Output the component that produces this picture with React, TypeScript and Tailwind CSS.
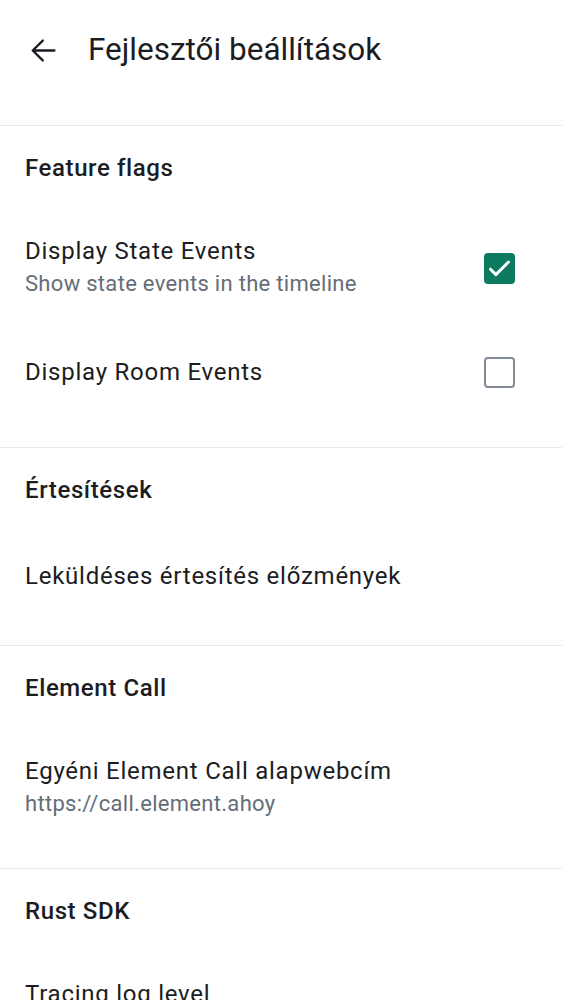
import { ReactNode } from 'react'

const FONT = { fontFamily: 'Roboto, "Noto Sans", sans-serif' }

function Checkbox({ checked }: { checked: boolean }) {
  if (checked) {
    return (
      <div className="w-[31px] h-[31px] rounded-[4px] bg-[#0b7a5f] flex items-center justify-center">
        <svg width="31" height="31" viewBox="0 0 31 31" fill="none">
          <path d="M6.5 16.2l5.4 5.4L24.5 9" stroke="white" strokeWidth="3" strokeLinecap="round" strokeLinejoin="round" />
        </svg>
      </div>
    )
  }
  return <div className="w-[31px] h-[31px] rounded-[4px] border-[2.5px] border-[#818a95]" />
}

function Section({ title, pb = 'pb-[25px]', children }: { title: string; pb?: string; children: ReactNode }) {
  return (
    <section className={`border-t border-[#e9e9eb] ${pb}`}>
      <div className="h-[84px] flex items-center px-[25px]">
        <h2 className="text-[24px] font-medium text-[#1b1d22] tracking-[0.6px]">{title}</h2>
      </div>
      {children}
    </section>
  )
}

function Row({ title, subtitle, checkbox, height }: { title: string; subtitle?: string; checkbox?: boolean; height: string }) {
  return (
    <div className={`${height} flex items-center justify-between pl-[25px] pr-[47px]`}>
      <div className="flex flex-col">
        <span className="text-[24px] leading-[32px] text-[#1b1d22] tracking-[0.75px]">{title}</span>
        {subtitle && <span className="text-[22px] leading-[34px] text-[#656d77] tracking-[0.3px]">{subtitle}</span>}
      </div>
      {checkbox !== undefined && <Checkbox checked={checkbox} />}
    </div>
  )
}

export default function App() {
  return (
    <div className="w-[562px] h-[1000px] overflow-hidden bg-white" style={FONT}>
      <header className="h-[100px] flex items-center mb-[25px]">
        <button className="ml-[26px] w-[35px] h-[35px] flex items-center justify-center text-[#1b1d22]">
          <svg width="35" height="35" viewBox="0 0 24 24" fill="none">
            <path d="M19.5 12H4.8M11.5 5.2L4.6 12l6.9 6.8" stroke="currentColor" strokeWidth="1.6" strokeLinecap="round" strokeLinejoin="round" />
          </svg>
        </button>
        <h1 className="ml-[27px] text-[31.5px] text-[#1b1d22]">Fejlesztői beállítások</h1>
      </header>

      <Section title="Feature flags" pb="pb-[29px]">
        <Row height="h-[116px]" title="Display State Events" subtitle="Show state events in the timeline" checkbox={true} />
        <Row height="h-[92px]" title="Display Room Events" checkbox={false} />
      </Section>

      <Section title="Értesítések">
        <Row height="h-[88px]" title="Leküldéses értesítés előzmények" />
      </Section>

      <Section title="Element Call" pb="pb-[22px]">
        <Row height="h-[116px]" title="Egyéni Element Call alapwebcím" subtitle="https://call.element.ahoy" />
      </Section>

      <Section title="Rust SDK">
        <Row height="h-[116px]" title="Tracing log level" subtitle="Info" />
      </Section>
    </div>
  )
}
